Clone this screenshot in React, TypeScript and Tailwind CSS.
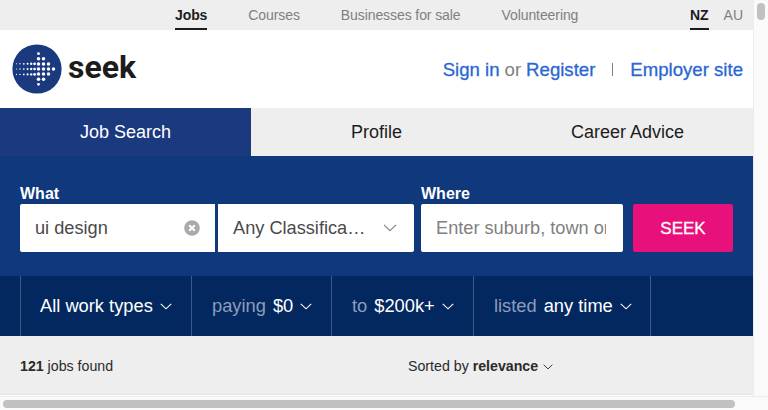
import React from 'react';

const Chevron = ({ className }: { className: string }) => (
  <svg viewBox="0 0 12 7" fill="none" stroke="currentColor" strokeWidth="1.1" className={className}>
    <path d="M0.8 0.8 L6 5.8 L11.2 0.8" />
  </svg>
);

const SeekLogo = () => {
  // dots of the arrow: [x, y, radius]
  const dots: number[][] = [];
  [16.5, 20, 23.8, 27.6, 31.2, 34.6].forEach((x, i) => {
    [62.8, 68, 73.4].forEach((y) => dots.push([x, y, 0.55 + i * 0.16]));
  });
  [3, 2, 1, 0].forEach((half, col) => {
    const x = 38.5 + col * 5;
    for (let row = -half; row <= half; row++) {
      dots.push([x, 68 + row * 5.1, Math.abs(row) === 3 ? 1.4 : 1.75]);
    }
  });
  return (
    <svg viewBox="12 43 50 50" className="w-[50px] h-[50px]">
      <circle cx="37" cy="68" r="24.6" fill="#1b397e" />
      {dots.map(([x, y, r], i) => (
        <circle key={i} cx={x} cy={y} r={r} fill="#fff" />
      ))}
    </svg>
  );
};

const FilterItem = ({ label, value, className }: { label?: string; value: string; className: string }) => (
  <div className={`flex items-center h-full border-l border-[#3d5a8a] text-[18.3px] ${className}`}>
    {label && <span className="text-[#8c9dbb] mr-[7px]">{label}</span>}
    <span className="text-white">{value}</span>
    <Chevron className="w-[12px] h-[7px] ml-[7px] text-white" />
  </div>
);

export default function App() {
  return (
    <div className="w-[768px] h-[410px] overflow-hidden flex flex-col bg-white font-['Liberation_Sans',Arial,sans-serif]">
      <div className="flex h-[396px]">
        <div className="w-[753px] shrink-0 flex flex-col">
          <div className="h-[30px] bg-[#eeeeee] flex text-[14px] text-[#808080] pl-[175px] pr-[10px]">
            <div className="flex gap-[41px] tracking-[-0.09px]">
              <span className="h-[30px] leading-[30px] font-bold text-[#1c1c1c] border-b-[2px] border-[#1c1c1c]">Jobs</span>
              <span className="leading-[30px]">Courses</span>
              <span className="leading-[30px]">Businesses for sale</span>
              <span className="leading-[30px]">Volunteering</span>
            </div>
            <div className="ml-auto flex gap-[15px]">
              <span className="h-[30px] leading-[30px] font-bold text-[#1c1c1c] border-b-[2px] border-[#1c1c1c]">NZ</span>
              <span className="leading-[30px]">AU</span>
            </div>
          </div>

          <div className="h-[78px] flex items-center pl-[12px] pr-[10px]">
            <SeekLogo />
            <span className="ml-[6px] text-[32px] font-bold leading-none text-[#1c1c1c] font-['Roboto',sans-serif] -mt-[4px]">seek</span>
            <div className="ml-auto flex items-center text-[18.6px] mt-[1px]">
              <span className="text-[#2a67d1] [-webkit-text-stroke:0.3px_#2a67d1]">Sign in</span>
              <span className="text-[#808080] mx-[5px]">or</span>
              <span className="text-[#2a67d1] [-webkit-text-stroke:0.3px_#2a67d1]">Register</span>
              <span className="w-px h-[13px] bg-[#808080] ml-[17px] mr-[17px]" />
              <span className="text-[#2a67d1] [-webkit-text-stroke:0.3px_#2a67d1]">Employer site</span>
            </div>
          </div>

          <div className="h-[48px] grid grid-cols-3 bg-[#eeeeee] text-[18px] text-[#1c1c1c]">
            <div className="bg-[#1b397e] text-white flex items-center justify-center">Job Search</div>
            <div className="flex items-center justify-center">Profile</div>
            <div className="flex items-center justify-center">Career Advice</div>
          </div>

          <div className="h-[120px] bg-[#10387d] pl-[20px] pt-[28px] flex">
            <div className="flex flex-col">
              <span className="h-[20px] leading-[20px] text-[16px] font-bold text-white">What</span>
              <div className="flex gap-[3px]">
                <div className="w-[195px] h-[48px] bg-white rounded-l-[2px] flex items-center pl-[15px] pr-[15px] text-[18.2px] text-[#4a4a4a]">
                  <span className="pt-[1px]">ui design</span>
                  <svg viewBox="0 0 16 16" className="w-[16px] h-[16px] ml-auto">
                    <circle cx="8" cy="8" r="7.8" fill="#ababab" />
                    <path d="M5.2 5.2 L10.8 10.8 M10.8 5.2 L5.2 10.8" stroke="#fff" strokeWidth="2" />
                  </svg>
                </div>
                <div className="w-[196px] h-[48px] bg-white rounded-r-[2px] flex items-center pl-[15px] pr-[17px] text-[18.2px] text-[#4a4a4a]">
                  <span className="pt-[1px]">Any Classifica…</span>
                  <Chevron className="w-[14px] h-[8px] ml-auto text-[#8a8a8a]" />
                </div>
              </div>
            </div>
            <div className="flex flex-col ml-[7px]">
              <span className="h-[20px] leading-[20px] text-[16px] font-bold text-white">Where</span>
              <div className="flex gap-[10px]">
                <div className="w-[202px] h-[48px] bg-white rounded-[2px] pl-[15px] pr-[17px]">
                  <input
                    readOnly
                    placeholder="Enter suburb, town or city"
                    className="w-full h-full pt-[1px] outline-none text-[18.2px] placeholder:text-[#808080]"
                  />
                </div>
                <div className="w-[100px] h-[48px] pt-[1px] bg-[#e8107a] rounded-[2px] flex items-center justify-center text-[17px] text-white [-webkit-text-stroke:0.3px_#fff]">
                  SEEK
                </div>
              </div>
            </div>
          </div>

          <div className="h-[60px] bg-[#03275f] pl-[20px] flex">
            <FilterItem value="All work types" className="w-[171px] pl-[19px]" />
            <FilterItem label="paying" value="$0" className="w-[140px] pl-[20px]" />
            <FilterItem label="to" value="$200k+" className="w-[142px] pl-[20px]" />
            <FilterItem label="listed" value="any time" className="w-[178px] pl-[20px] border-r" />
          </div>

          <div className="h-[59px] bg-[#eeeeee] border-b border-[#e4e4e4] flex items-center pl-[20px] pt-[3px] text-[14.2px] text-[#2a2a2a]">
            <span className="w-[388px]"><b>121</b> jobs found</span>
            <span>Sorted by <b>relevance</b></span>
            <Chevron className="w-[10px] h-[6px] ml-[5px] text-[#2a2a2a]" />
          </div>
        </div>

        <div className="w-[15px] bg-[#fafafa] border-l border-[#ececec] pl-[3px] pt-[3px]">
          <div className="w-[8px] h-[17px] rounded-full bg-[#c1c1c1]" />
        </div>
      </div>

      <div className="h-[14px] bg-[#fafafa] border-t border-[#ececec] pl-[3px] pt-[3px]">
        <div className="w-[732px] h-[8px] rounded-full bg-[#c1c1c1]" />
      </div>
    </div>
  );
}
